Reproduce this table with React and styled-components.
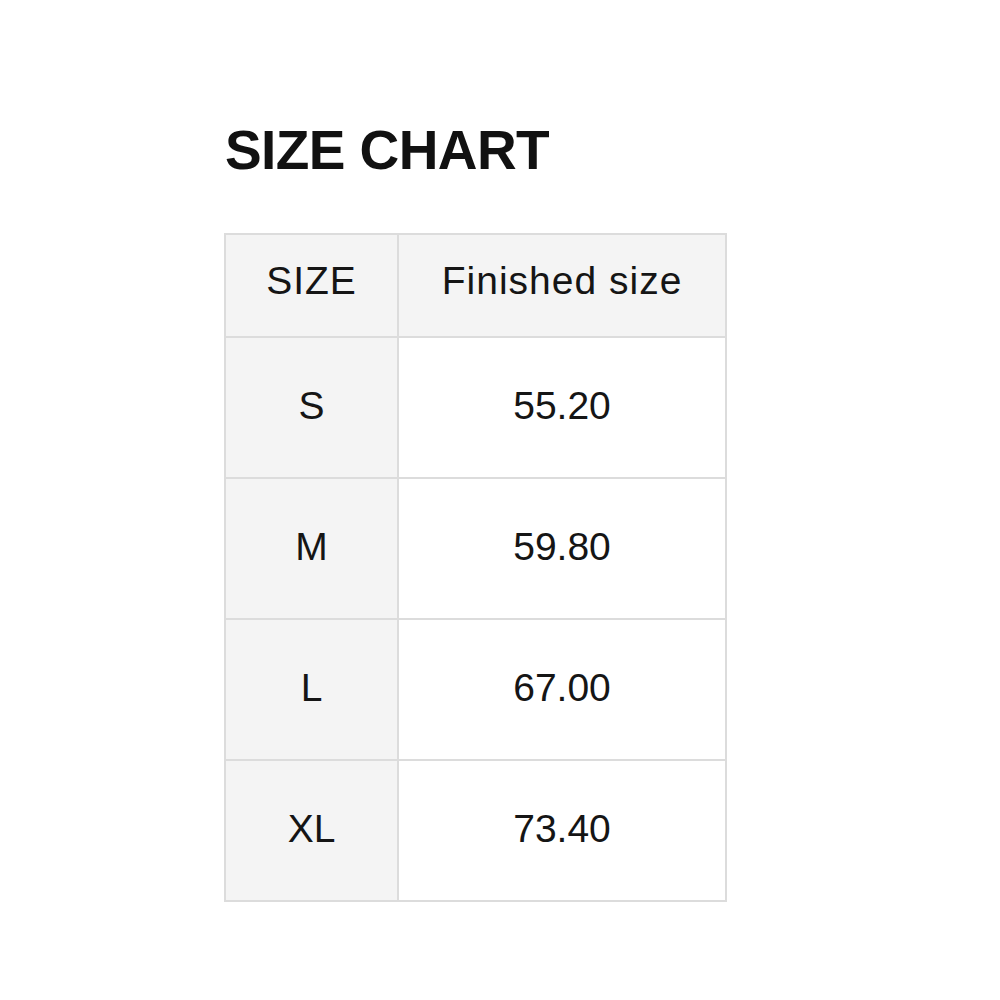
import React from "react";
import styled, { createGlobalStyle } from "styled-components";

const GlobalStyle = createGlobalStyle`
    html, body {
        margin: 0;
        padding: 0;
        background: #ffffff;
    }
    body {
        font-family: "Liberation Sans", Arial, sans-serif;
        color: #111111;
    }
`;

const Page = styled.div`
    width: 1000px;
    height: 1000px;
    padding: 123px 0 0 224px;
    box-sizing: border-box;
`;

const Title = styled.h2`
    margin: 0 0 55px 1px;
    font-size: 55px;
    line-height: 55px;
    font-weight: 700;
    letter-spacing: -0.6px;
    color: #111;
`;

const Table = styled.table`
    border-collapse: collapse;
    table-layout: fixed;
    width: 503px;
`;

const Cell = styled.td`
    border: 2px solid #dcdcdc;
    width: ${(p) => (p.$first ? "171px" : "324px")};
    height: ${(p) => (p.$head ? "103px" : "141px")};
    padding: 0 0 ${(p) => (p.$head ? "10px" : "4px")} 0;
    box-sizing: border-box;
    text-align: center;
    vertical-align: middle;
    font-size: 39px;
    letter-spacing: ${(p) => (p.$head ? "1px" : "0")};
    color: #151515;
    background: ${(p) => (p.$first || p.$head ? "#f4f4f4" : "#ffffff")};
`;

const rows = [
    ["S", "55.20"],
    ["M", "59.80"],
    ["L", "67.00"],
    ["XL", "73.40"],
];

export default function App() {
    return (
        <>
            <GlobalStyle />
            <Page>
                <Title>SIZE CHART</Title>
                <Table>
                    <tbody>
                        <tr>
                            <Cell $head $first>SIZE</Cell>
                            <Cell $head>Finished size</Cell>
                        </tr>
                        {rows.map(([size, value]) => (
                            <tr key={size}>
                                <Cell $first>{size}</Cell>
                                <Cell>{value}</Cell>
                            </tr>
                        ))}
                    </tbody>
                </Table>
            </Page>
        </>
    );
}
